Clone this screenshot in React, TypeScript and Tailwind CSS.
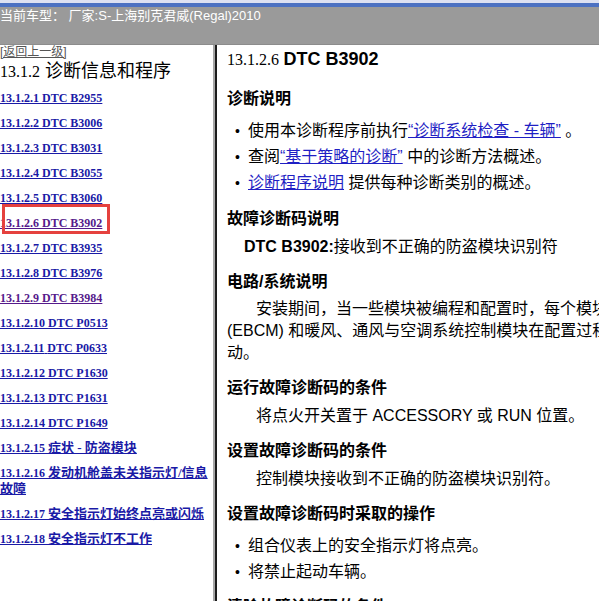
const serif = "font-['Liberation_Serif','Noto_Sans_CJK_SC',serif]";
const sans = "font-['Liberation_Sans','Noto_Sans_CJK_SC',sans-serif]";

type Item = { num: string; text: string; zh?: boolean; visited?: boolean; marked?: boolean };

const items: Item[] = [
  { num: "13.1.2.1", text: "DTC B2955" },
  { num: "13.1.2.2", text: "DTC B3006" },
  { num: "13.1.2.3", text: "DTC B3031" },
  { num: "13.1.2.4", text: "DTC B3055" },
  { num: "13.1.2.5", text: "DTC B3060" },
  { num: "13.1.2.6", text: "DTC B3902", visited: true, marked: true },
  { num: "13.1.2.7", text: "DTC B3935" },
  { num: "13.1.2.8", text: "DTC B3976" },
  { num: "13.1.2.9", text: "DTC B3984", visited: true },
  { num: "13.1.2.10", text: "DTC P0513" },
  { num: "13.1.2.11", text: "DTC P0633" },
  { num: "13.1.2.12", text: "DTC P1630" },
  { num: "13.1.2.13", text: "DTC P1631" },
  { num: "13.1.2.14", text: "DTC P1649" },
  { num: "13.1.2.15", text: "症状 - 防盗模块", zh: true },
  { num: "13.1.2.16", text: "发动机舱盖未关指示灯/信息故障", zh: true },
  { num: "13.1.2.17", text: "安全指示灯始终点亮或闪烁", zh: true },
  { num: "13.1.2.18", text: "安全指示灯不工作", zh: true },
];

const Bullet = ({ children }: { children: React.ReactNode }) => (
  <li className="flex leading-[26px] whitespace-nowrap">
    <span className="w-[21px] shrink-0 pl-[8px] text-[14px]">•</span>
    <span>{children}</span>
  </li>
);

const Heading = ({ children, mt }: { children: React.ReactNode; mt: string }) => (
  <h3 className={`${mt} text-[16px] font-bold leading-[22px] whitespace-nowrap text-black`}>{children}</h3>
);

export default function App() {
  return (
    <div className={`w-[599px] h-[601px] overflow-hidden bg-white flex flex-col ${sans}`}>
      {/* title bar */}
      <div className="h-[3px] bg-[#dde1f2] shrink-0" />
      <div className="h-[4px] bg-[#4c71c2] shrink-0" />
      <div className="h-[38px] bg-[#9a9a9a] border-b border-[#8c8c8c] shrink-0">
        <p className="mt-[1px] text-[13px] leading-[16px] text-white whitespace-nowrap">当前车型： 厂家:S-上海别克君威(Regal)2010</p>
      </div>

      <div className="flex flex-1 min-h-0">
        {/* left nav */}
        <div className="w-[213px] shrink-0 overflow-hidden">
          <a className="block text-[12px] leading-[14px] text-[#555] underline whitespace-nowrap">[返回上一级]</a>
          <h2 className="mt-[1px] text-[18px] leading-[22px] text-black whitespace-nowrap">
            <span className={`${serif} text-[16px]`}>13.1.2</span> 诊断信息和程序
          </h2>
          <div className={`mt-[7px] flex flex-col gap-[9px] ${serif} text-[12px] font-bold leading-[16px]`}>
            {items.map((it) => (
              <div key={it.num} className="relative">
                <a className={`underline ${it.visited ? "text-[#551a8b]" : "text-[#1a1aa6]"}`}>
                  {it.num} {it.zh ? <span className="text-[13px]">{it.text}</span> : it.text}
                </a>
                {it.marked && (
                  <span className="absolute left-[2px] top-[-11px] w-[108px] h-[30px] border-[3px] border-[#e5413e]" />
                )}
              </div>
            ))}
          </div>
        </div>

        {/* divider */}
        <div className="w-[2px] shrink-0 bg-[#a6a6a6]" />
        <div className="w-[2px] shrink-0 bg-[#1c1c1c]" />

        {/* content */}
        <div className="flex-1 min-w-0 overflow-hidden pl-[10px] pt-[3px] text-[16px] text-black">
          <h1 className="leading-[22px] whitespace-nowrap">
            <span className={`${serif} text-[16px]`}>13.1.2.6</span>{" "}
            <span className="text-[18px] font-bold">DTC B3902</span>
          </h1>

          <Heading mt="mt-[17px]">诊断说明</Heading>
          <ul className="mt-[8px]">
            <Bullet>
              使用本诊断程序前执行<a className="text-[#1f1fc4] underline">“诊断系统检查 - 车辆”</a> 。
            </Bullet>
            <Bullet>
              查阅<a className="text-[#1f1fc4] underline">“基于策略的诊断”</a> 中的诊断方法概述。
            </Bullet>
            <Bullet>
              <a className="text-[#1f1fc4] underline">诊断程序说明</a> 提供每种诊断类别的概述。
            </Bullet>
          </ul>

          <Heading mt="mt-[12px]">故障诊断码说明</Heading>
          <p className="mt-[6px] pl-[17px] leading-[22px] whitespace-nowrap">
            <b>DTC B3902:</b>接收到不正确的防盗模块识别符
          </p>

          <Heading mt="mt-[13px]">电路/系统说明</Heading>
          <div className="mt-[5px] leading-[22px] whitespace-nowrap">
            <p className="pl-[29px]">安装期间，当一些模块被编程和配置时，每个模块都会获取车身控制模块的防盗模块识别符。电子制动控制模块</p>
            <p>(EBCM) 和暖风、通风与空调系统控制模块在配置过程中如果接收到不正确的识别符，将禁止车辆起</p>
            <p>动。</p>
          </div>

          <Heading mt="mt-[13px]">运行故障诊断码的条件</Heading>
          <p className="mt-[6px] pl-[29px] leading-[22px] whitespace-nowrap">将点火开关置于 ACCESSORY 或 RUN 位置。</p>

          <Heading mt="mt-[13px]">设置故障诊断码的条件</Heading>
          <p className="mt-[6px] pl-[29px] leading-[22px] whitespace-nowrap">控制模块接收到不正确的防盗模块识别符。</p>

          <Heading mt="mt-[13px]">设置故障诊断码时采取的操作</Heading>
          <ul className="mt-[8px]">
            <Bullet>组合仪表上的安全指示灯将点亮。</Bullet>
            <Bullet>将禁止起动车辆。</Bullet>
          </ul>

          <Heading mt="mt-[11px]">清除故障诊断码的条件</Heading>
        </div>
      </div>
    </div>
  );
}
